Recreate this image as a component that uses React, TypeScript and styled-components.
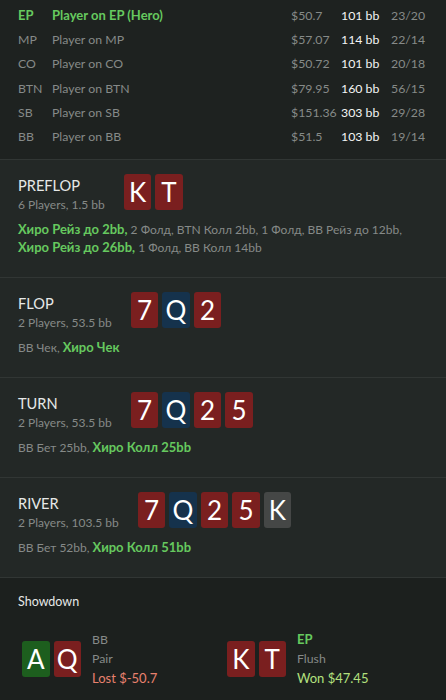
import React from "react";
import styled, { createGlobalStyle } from "styled-components";

const Global = createGlobalStyle`
  html, body { margin: 0; padding: 0; background: #1c201e; }
  body { font-family: "Lato", "Noto Sans", sans-serif; -webkit-font-smoothing: antialiased; }
  * { box-sizing: border-box; }
`;

const C = {
  grey: "#868a88",
  white: "#e6e8e7",
  bright: "#f4f5f4",
  green: "#66c95f",
  won: "#b3e07e",
  lost: "#e8816e",
};

const Page = styled.div`
  width: 446px;
  height: 700px;
  overflow: hidden;
  display: flex;
  flex-direction: column;
`;

const PlayerTable = styled.div`
  background: #1e2220;
  padding: 3px 0 10px 18px;
  border-bottom: 1px solid #313634;
  display: grid;
  grid-template-columns: 34px 1fr 50px 50px 55px;
  grid-auto-rows: 24.3px;
  align-items: center;
  font-size: 12px;
`;

const Cell = styled.div<{ $tone: keyof typeof C; $bold?: boolean }>`
  color: ${(p) => C[p.$tone]};
  font-weight: ${(p) => (p.$bold ? 700 : 400)};
  font-size: ${(p) => (p.$bold ? "13px" : "12.3px")};
  white-space: nowrap;
`;

const Street = styled.section`
  background: #232826;
  border-bottom: 1px solid #313634;
  padding: 14px 18px 20px;
  display: flex;
  flex-direction: column;
  gap: 11px;
`;

const StreetHead = styled.div`
  height: 36px;
  display: flex;
  align-items: flex-start;
  gap: 19px;
`;

const TitleBlock = styled.div`
  margin-top: 2px;
  display: flex;
  flex-direction: column;
`;

const Title = styled.div`
  font-size: 14.6px;
  line-height: 20px;
  color: ${C.white};
`;

const Sub = styled.div`
  font-size: 12px;
  line-height: 18px;
  color: ${C.grey};
  white-space: nowrap;
`;

const Cards = styled.div`
  display: flex;
  gap: 4px;
`;

const suitColor = { r: "#7a1f1f", b: "#15324c", g: "#454746", c: "#1d5e1e" };

const Card = styled.div<{ $suit: keyof typeof suitColor }>`
  width: 27.5px;
  height: 36px;
  border-radius: 3px;
  background: ${(p) => suitColor[p.$suit]};
  color: #ffffff;
  font-size: 26px;
  display: flex;
  align-items: center;
  justify-content: center;
  line-height: 1;
`;

const Actions = styled.div`
  font-size: 12px;
  line-height: 18px;
  color: ${C.grey};
  white-space: nowrap;
`;

const Hero = styled.span`
  color: ${C.green};
  font-weight: 700;
  font-size: 13px;
  line-height: 1;
`;

const Showdown = styled.section`
  flex: 1;
  background: #1c201e;
  padding: 15px 0 0 18px;
`;

const ShowTitle = styled.div`
  font-size: 12.5px;
  line-height: 18px;
  color: ${C.white};
`;

const Hands = styled.div`
  margin-top: 19px;
  padding-left: 4px;
  display: grid;
  grid-template-columns: 205px 205px;
`;

const Hand = styled.div`
  display: flex;
  align-items: center;
  gap: 11px;
`;

const HandInfo = styled.div`
  font-size: 12px;
  line-height: 19.5px;
`;

const Line = styled.div<{ $tone: keyof typeof C; $bold?: boolean; $big?: boolean }>`
  color: ${(p) => C[p.$tone]};
  font-weight: ${(p) => (p.$bold ? 700 : 400)};
  font-size: ${(p) => (p.$bold || p.$big ? "13px" : "12.3px")};
`;

type CardT = [string, keyof typeof suitColor];

const players = [
  ["EP", "Player on EP (Hero)", "$50.7", "101 bb", "23/20", true],
  ["MP", "Player on MP", "$57.07", "114 bb", "22/14", false],
  ["CO", "Player on CO", "$50.72", "101 bb", "20/18", false],
  ["BTN", "Player on BTN", "$79.95", "160 bb", "56/15", false],
  ["SB", "Player on SB", "$151.36", "303 bb", "29/28", false],
  ["BB", "Player on BB", "$51.5", "103 bb", "19/14", false],
] as const;

const streets: { title: string; sub: string; cards: CardT[]; actions: React.ReactNode }[] = [
  {
    title: "PREFLOP",
    sub: "6 Players, 1.5 bb",
    cards: [["K", "r"], ["T", "r"]],
    actions: (
      <>
        <Hero>Хиро Рейз до 2bb,</Hero> 2 Фолд, BTN Колл 2bb, 1 Фолд, BB Рейз до 12bb,
        <br />
        <Hero>Хиро Рейз до 26bb,</Hero> 1 Фолд, BB Колл 14bb
      </>
    ),
  },
  {
    title: "FLOP",
    sub: "2 Players, 53.5 bb",
    cards: [["7", "r"], ["Q", "b"], ["2", "r"]],
    actions: (
      <>
        BB Чек, <Hero>Хиро Чек</Hero>
      </>
    ),
  },
  {
    title: "TURN",
    sub: "2 Players, 53.5 bb",
    cards: [["7", "r"], ["Q", "b"], ["2", "r"], ["5", "r"]],
    actions: (
      <>
        BB Бет 25bb, <Hero>Хиро Колл 25bb</Hero>
      </>
    ),
  },
  {
    title: "RIVER",
    sub: "2 Players, 103.5 bb",
    cards: [["7", "r"], ["Q", "b"], ["2", "r"], ["5", "r"], ["K", "g"]],
    actions: (
      <>
        BB Бет 52bb, <Hero>Хиро Колл 51bb</Hero>
      </>
    ),
  },
];

export default function App() {
  return (
    <Page>
      <Global />
      <PlayerTable>
        {players.map(([pos, name, money, bb, stats, hero]) => (
          <React.Fragment key={pos}>
            <Cell $tone={hero ? "green" : "grey"} $bold={hero}>{pos}</Cell>
            <Cell $tone={hero ? "green" : "grey"} $bold={hero}>{name}</Cell>
            <Cell $tone="grey">{money}</Cell>
            <Cell $tone="bright">{bb}</Cell>
            <Cell $tone="grey">{stats}</Cell>
          </React.Fragment>
        ))}
      </PlayerTable>
      {streets.map((s) => (
        <Street key={s.title}>
          <StreetHead>
            <TitleBlock>
              <Title>{s.title}</Title>
              <Sub>{s.sub}</Sub>
            </TitleBlock>
            <Cards>
              {s.cards.map(([r, su], i) => (
                <Card key={i} $suit={su}>{r}</Card>
              ))}
            </Cards>
          </StreetHead>
          <Actions>{s.actions}</Actions>
        </Street>
      ))}
      <Showdown>
        <ShowTitle>Showdown</ShowTitle>
        <Hands>
          <Hand>
            <Cards>
              <Card $suit="c">A</Card>
              <Card $suit="r">Q</Card>
            </Cards>
            <HandInfo>
              <Line $tone="grey">BB</Line>
              <Line $tone="grey">Pair</Line>
              <Line $tone="lost" $big>Lost $-50.7</Line>
            </HandInfo>
          </Hand>
          <Hand>
            <Cards>
              <Card $suit="r">K</Card>
              <Card $suit="r">T</Card>
            </Cards>
            <HandInfo>
              <Line $tone="green" $bold>EP</Line>
              <Line $tone="grey">Flush</Line>
              <Line $tone="won" $big>Won $47.45</Line>
            </HandInfo>
          </Hand>
        </Hands>
      </Showdown>
    </Page>
  );
}
